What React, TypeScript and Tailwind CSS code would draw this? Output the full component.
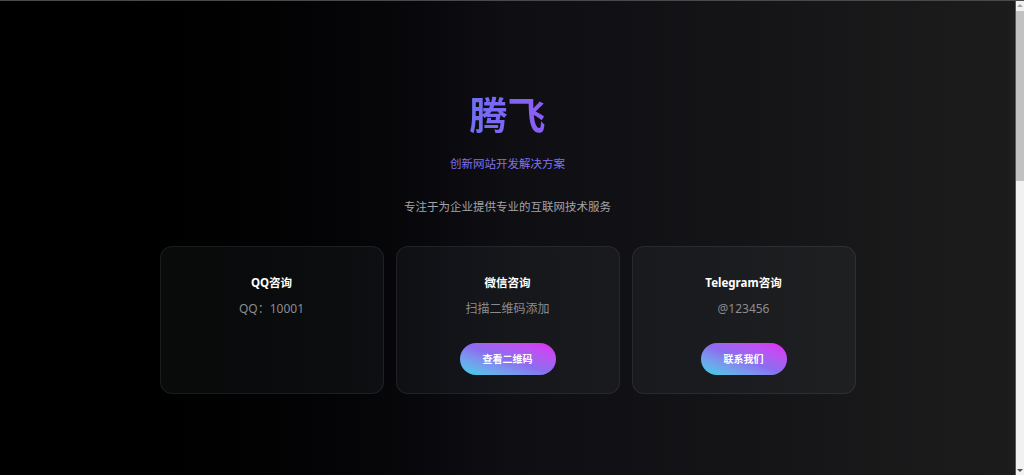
import React from "react"

type Card = {
  title: string
  value: string
  action?: string
}

const cards: Card[] = [
  { title: "QQ咨询", value: "QQ：10001" },
  { title: "微信咨询", value: "扫描二维码添加", action: "查看二维码" },
  { title: "Telegram咨询", value: "@123456", action: "联系我们" },
]

function ContactCard({ card }: { card: Card }) {
  return (
    <div className="flex flex-col items-center rounded-xl border border-white/[0.07] bg-[#9ca3af]/[0.06] px-4 pt-[26px] pb-[18px]">
      <h3 className="text-[11.5px] leading-5 font-bold text-white">{card.title}</h3>
      <p className="mt-[6px] text-[12px] leading-5 text-[#8c8c90]">{card.value}</p>
      {card.action && (
        <button className="mt-6 h-8 rounded-full bg-gradient-to-tr from-[#1fd3e6] via-[#8b6cf0] to-[#e21cf5] px-[23px] text-[10px] font-bold text-white">
          {card.action}
        </button>
      )}
    </div>
  )
}

// stand-in for the browser's scrollbar in the reference shot
function FakeScrollbar() {
  return (
    <div className="relative flex w-[9px] shrink-0 flex-col border-l border-[#5a5a5a] bg-[#f1f1f1]">
      <div className="mx-auto mt-[3px] h-0 w-0 border-x-[3px] border-b-[3px] border-x-transparent border-b-[#a3a3a3]" />
      <div className="mt-[4px] h-[170px] bg-[#c1c1c1]" />
      <div className="mt-auto mb-[3px] mx-auto h-0 w-0 border-x-[3px] border-t-[3px] border-x-transparent border-t-[#505050]" />
    </div>
  )
}

export default function App() {
  return (
    <div
      className="flex h-screen overflow-hidden border-t border-[#4a4a4a] text-white"
      style={{ fontFamily: '"Noto Sans", "Noto Sans CJK SC", sans-serif' }}
    >
      <main className="flex flex-1 flex-col items-center bg-gradient-to-r from-black via-[#0e0e13] to-[#1c1c1c] pt-[89px]">
        <h1 className="bg-gradient-to-r from-[#6f6ff2] to-[#8b5cf6] bg-clip-text text-[38px] leading-[48px] font-bold text-transparent">
          腾飞
        </h1>
        <p className="mt-4 text-[11.5px] leading-5 text-[#7f72ee]">创新网站开发解决方案</p>
        <p className="mt-[23px] text-[11.5px] leading-5 text-[#a3a3a8]">专注于为企业提供专业的互联网技术服务</p>

        <div className="mt-[29px] grid w-[696px] grid-cols-3 gap-3">
          {cards.map((c) => (
            <ContactCard key={c.title} card={c} />
          ))}
        </div>
      </main>
      <FakeScrollbar />
    </div>
  )
}
